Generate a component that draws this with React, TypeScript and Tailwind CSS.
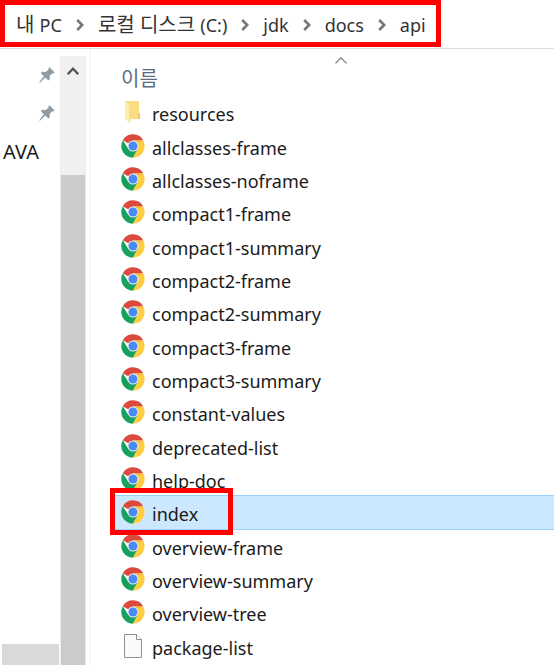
import { Fragment, useState } from "react";

type FileKind = "folder" | "chrome" | "file";

const files: { name: string; kind: FileKind }[] = [
  { name: "resources", kind: "folder" },
  { name: "allclasses-frame", kind: "chrome" },
  { name: "allclasses-noframe", kind: "chrome" },
  { name: "compact1-frame", kind: "chrome" },
  { name: "compact1-summary", kind: "chrome" },
  { name: "compact2-frame", kind: "chrome" },
  { name: "compact2-summary", kind: "chrome" },
  { name: "compact3-frame", kind: "chrome" },
  { name: "compact3-summary", kind: "chrome" },
  { name: "constant-values", kind: "chrome" },
  { name: "deprecated-list", kind: "chrome" },
  { name: "help-doc", kind: "chrome" },
  { name: "index", kind: "chrome" },
  { name: "overview-frame", kind: "chrome" },
  { name: "overview-summary", kind: "chrome" },
  { name: "overview-tree", kind: "chrome" },
  { name: "package-list", kind: "file" },
];

// Hangul is set slightly larger than the Latin text beside it.
const crumbs: { hangul?: string; latin: string }[] = [
  { hangul: "내 ", latin: "PC" },
  { hangul: "로컬 디스크 ", latin: "(C:)" },
  { latin: "jdk" },
  { latin: "docs" },
  { latin: "api" },
];

function ChromeIcon() {
  return (
    <svg viewBox="0 0 48 48" className="size-6" aria-hidden="true">
      <circle cx="24" cy="24" r="23.5" fill="#fff" />
      <path d="M24 24 3.6 12.3A23.5 23.5 0 0 1 44.6 13H24Z" fill="#dc4a3e" />
      <path d="M24 24V13H44.6A23.5 23.5 0 0 1 23.5 47.5L33.5 29.5Z" fill="#ffcd41" />
      <path d="M24 24 33.5 29.5 23.5 47.5A23.5 23.5 0 0 1 3.6 12.3L14.5 29.5Z" fill="#17a05e" />
      <path d="M24 13H44.6L34 17Z" fill="#e0a23a" opacity=".6" />
      <circle cx="24" cy="24" r="11" fill="#f1f1f1" />
      <circle cx="24" cy="24" r="9" fill="#4a8af5" />
    </svg>
  );
}

function FolderIcon() {
  return (
    <svg viewBox="0 0 24 24" className="size-6" aria-hidden="true">
      <path d="M4 1h14v12l1 1v5H4Z" fill="#fadc82" />
      <path d="M17 13.5h2V19h-2Z" fill="#efc868" />
      <path d="M4 1.5 9 4.5v18L4 19.5Z" fill="#ffebae" />
      <path d="M9 4.5v18" stroke="#f3d27a" strokeWidth=".7" />
    </svg>
  );
}

function PageIcon() {
  return (
    <svg viewBox="0 0 24 24" className="size-6" aria-hidden="true">
      <path d="M3.5.5h12l5 5v18h-17Z" fill="#f9fafa" stroke="#919191" />
      <path d="M15.5.5v5h5" fill="#fff" stroke="#919191" />
    </svg>
  );
}

function FileIcon({ kind }: { kind: FileKind }) {
  if (kind === "folder") return <FolderIcon />;
  if (kind === "file") return <PageIcon />;
  return <ChromeIcon />;
}

function CrumbArrow() {
  return (
    <svg viewBox="0 0 8 12" className="h-3 w-2 shrink-0" fill="none" stroke="#777" strokeWidth="2.6" aria-hidden="true">
      <path d="m1.2 1 5 5-5 5" />
    </svg>
  );
}

function PinIcon() {
  return (
    <svg viewBox="0 0 16 16" className="size-4" fill="#8f9ca5" aria-hidden="true">
      <path d="m10.5.3 5.2 5.2-1.4 1-1-.2-2.7 2.8.2 3.2-1.4 1.3-3.2-3.2L1 15.8l-.8-.5 4.6-6L1.8 6l1.4-1.2 3.5.3L9.6 2.6 9.4 1.3Z" />
    </svg>
  );
}

export default function App() {
  const [selected, setSelected] = useState("index");

  return (
    <div className="flex min-h-screen flex-col overflow-hidden bg-white font-['Noto_Sans','Noto_Sans_CJK_KR',sans-serif] text-lg text-[#1b1b1b]">
      <header className="flex h-[49px] items-start border-b border-[#dedede]">
        <nav aria-label="경로" className="flex h-[47px] items-center gap-[14px] border-5 border-[#ff0000] pt-0.5 pr-[10px] pl-[11px] whitespace-nowrap">
          {crumbs.map(({ hangul, latin }, i) => (
            <Fragment key={latin}>
              {i > 0 && <CrumbArrow />}
              <button type="button" className="text-[#333]">
                {hangul && <span className="text-xl">{hangul}</span>}
                {latin}
              </button>
            </Fragment>
          ))}
        </nav>
      </header>

      <div className="flex flex-1">
        <aside className="flex w-[60px] shrink-0 flex-col justify-between pt-[18px]">
          <div className="flex flex-col">
            <button type="button" aria-label="고정됨 1" className="mr-[5px] mb-[22px] self-end">
              <PinIcon />
            </button>
            <button type="button" aria-label="고정됨 2" className="mr-[5px] mb-[17px] self-end">
              <PinIcon />
            </button>
            <button type="button" className="pl-[3px] text-left text-xl">AVA</button>
          </div>
          <div className="mr-px ml-0.5 h-[21px] bg-[#d9d9d9]" />
        </aside>

        <div className="mt-[7px] flex w-[26px] shrink-0 flex-col border-x border-[#ececec] bg-[#f0f0f0]">
          <button type="button" aria-label="위로 스크롤" className="flex h-[119px] justify-center pt-[10px]">
            <svg viewBox="0 0 12 10" className="h-[10px] w-3" fill="none" stroke="#555" strokeWidth="2.4" aria-hidden="true">
              <path d="m.8 8.2 5.2-5.5 5.2 5.5" />
            </svg>
          </button>
          <div className="flex-1 bg-[#cbcbcb]" />
        </div>

        <main className="ml-[3px] min-w-0 flex-1 border-l-2 border-[#f7f7f7]">
          <button type="button" className="relative flex h-[46px] w-full items-end pb-0.5 pl-[30px] text-xl text-[#5d6b85]">
            이름
            <svg viewBox="0 0 12 7" className="absolute top-2 left-[244px] h-[7px] w-3" fill="none" stroke="#777" strokeWidth="1.2" aria-hidden="true">
              <path d="m.5 6.3 5.5-5.5 5.5 5.5" />
            </svg>
          </button>
          <ul className="pl-6">
            {files.map(({ name, kind }) => (
              <li key={name} className="relative h-[33px] nth-[3n+1]:mb-px">
                <button
                  type="button"
                  onClick={() => setSelected(name)}
                  aria-pressed={selected === name}
                  className={`flex h-[35px] w-full items-center gap-[7px] border-y pb-0.5 pl-[6px] text-left ${
                    selected === name ? "border-[#99d1ff] bg-[#cce8ff]" : "border-transparent"
                  }`}
                >
                  <FileIcon kind={kind} />
                  <span className="pt-1">{name}</span>
                </button>
                {name === "index" && (
                  <span className="pointer-events-none absolute -top-[7px] -left-[5px] z-10 h-[47px] w-[123px] border-5 border-[#ff0000]" />
                )}
              </li>
            ))}
          </ul>
        </main>
      </div>
    </div>
  );
}
